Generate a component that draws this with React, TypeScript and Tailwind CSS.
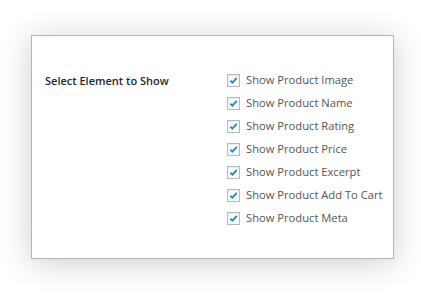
import React from "react";

const items = [
  "Show Product Image",
  "Show Product Name",
  "Show Product Rating",
  "Show Product Price",
  "Show Product Excerpt",
  "Show Product Add To Cart",
  "Show Product Meta",
];

function Check() {
  return (
    <span className="flex h-[13px] w-[13px] shrink-0 items-center justify-center border border-[#b4b9be] bg-white shadow-[inset_0_1px_2px_rgba(0,0,0,0.1)]">
      <svg width="9" height="9" viewBox="0 0 9 9">
        <path d="M1.3 4.6 L3.4 6.7 L7.8 1.8" fill="none" stroke="#1e8cbe" strokeWidth="1.8" />
      </svg>
    </span>
  );
}

export default function App() {
  return (
    <div className="h-[302px] w-[421px] bg-white pl-[31px] pt-[35px]" style={{ fontFamily: '"Open Sans", sans-serif' }}>
      <div className="flex h-[224px] w-[363px] border border-[#b5b5b5] bg-white pt-[33px] shadow-[0_4px_30px_rgba(0,0,0,0.2)]">
        <div className="w-[195px] shrink-0 pl-[13px] text-[11px] font-semibold leading-[23px] text-[#23282d]">
          Select Element to Show
        </div>
        <div className="flex flex-col">
          {items.map((t) => (
            <label key={t} className="flex h-[23px] items-center gap-[6px] whitespace-nowrap text-[11.2px] text-[#555]">
              <Check />
              <span>{t}</span>
            </label>
          ))}
        </div>
      </div>
    </div>
  );
}
